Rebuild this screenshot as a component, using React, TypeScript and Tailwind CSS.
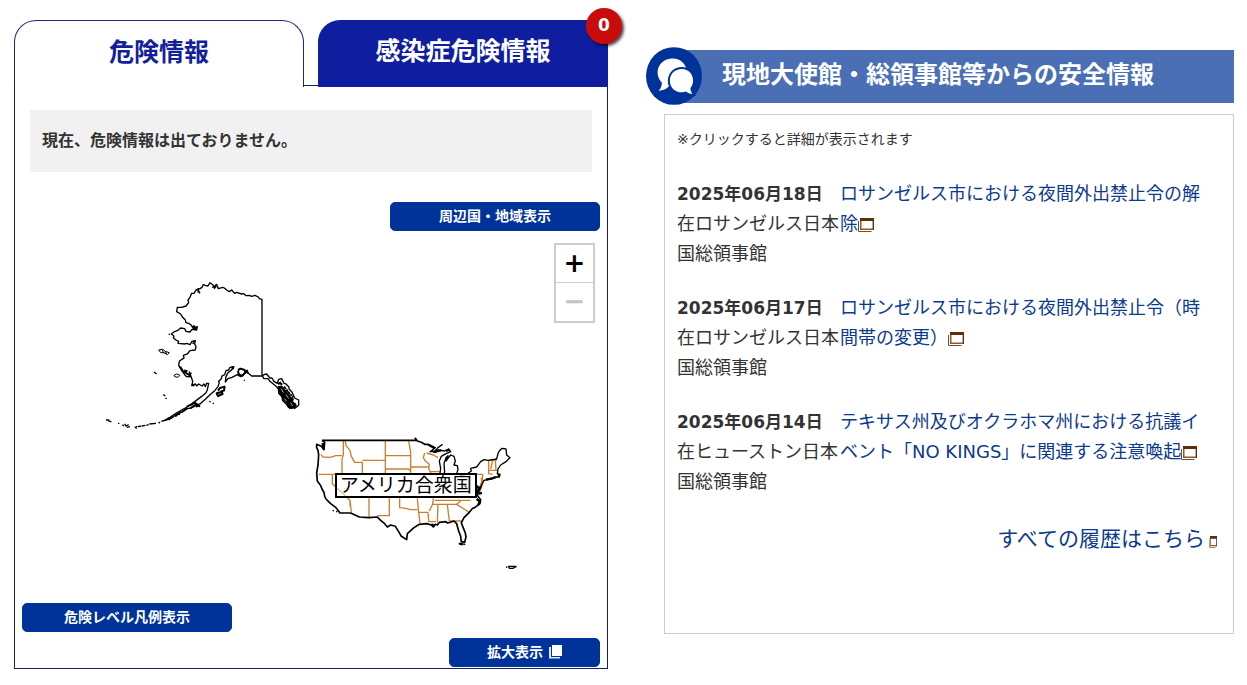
import { useState } from "react";

const news = [
  {
    date: "2025年06月18日",
    office: "在ロサンゼルス日本国総領事館",
    title: "ロサンゼルス市における夜間外出禁止令の解除",
  },
  {
    date: "2025年06月17日",
    office: "在ロサンゼルス日本国総領事館",
    title: "ロサンゼルス市における夜間外出禁止令（時間帯の変更）",
  },
  {
    date: "2025年06月14日",
    office: "在ヒューストン日本国総領事館",
    title: "テキサス州及びオクラホマ州における抗議イベント「NO KINGS」に関連する注意喚起",
  },
];

const mapButton =
  "flex h-[29px] items-center justify-center gap-1.5 rounded-[5px] border border-[#003399] bg-[#003399] pb-0.5 text-sm font-bold text-white";

function WindowIcon({ className }: { className: string }) {
  return (
    <svg viewBox="0 0 16 14" preserveAspectRatio="none" className={className} aria-hidden="true">
      <path d="M0.5 3V13.5H13.5" fill="none" stroke="#7a4a20" />
      <rect x="2" y="0" width="14" height="12" fill="#8a5a33" />
      <rect x="3.500" y="3" width="11" height="7.500" fill="#fff" />
      <rect x="2" y="0" width="14" height="3" fill="#5c2f0a" />
      <path d="M15.500 0V12" stroke="#5c2f0a" />
    </svg>
  );
}

function CopyIcon() {
  return (
    <svg viewBox="0 0 13 15" className="h-[15px] w-[13px]" aria-hidden="true">
      <rect x="3" y="1" width="10" height="11" fill="#fff" />
      <path d="M0 3H2V13H11V14.500H0Z" fill="#dfe6f5" />
    </svg>
  );
}

function ChatIcon() {
  return (
    <svg viewBox="18 22 169 174" className="h-[58px] w-14" aria-hidden="true">
      <ellipse cx="102.500" cy="109" rx="84.500" ry="87" fill="#003399" />
      <path
        d="M98 56C73 56 53 74 53 98C53 111 58 121 66 129C66 139 62 147 56 154C70 153 80 149 86 141C90 142 94 142 98 142C123 142 141 123 141 98C141 74 123 56 98 56Z"
        fill="#fff"
      />
      <path
        d="M126 88C105 88 90 103 90 123C90 144 106 158 126 158C131 158 135 157 139 156C144 160 150 163 158 163C154 157 152 151 152 145C157 139 160 132 160 123C160 103 146 88 126 88Z"
        fill="#fff"
        stroke="#003399"
        strokeWidth="12"
        paintOrder="stroke"
      />
    </svg>
  );
}

function CountryMap() {
  return (
    <svg viewBox="15 231 592 372" className="block h-auto w-full" fill="none" strokeLinejoin="round" role="img" aria-label="アメリカ合衆国の地図">
      {/* Alaska */}
      <g transform="translate(90 270) scale(0.3333)" stroke="#000" strokeWidth="4">
        <path d="M516 316V88L508 86L505 81L495 76L485 79L478 76L468 77L462 71L455 72L440 67L434 70L425 60L418 65L410 60L403 54L398 52L385 56L380 43L372 50L368 44L360 38L354 48L346 46L340 44L336 52L330 56L318 60L312 70L305 70L300 82L294 90L296 98L288 108L275 112L262 112L260 125L272 132L278 142L286 150L288 158L296 160L304 166L310 175L322 170L320 180L306 178L300 186L288 184L284 176L272 174L262 182L252 186L244 192L252 198L250 204L258 210L266 214L264 220L285 222L290 220L300 224L306 214L316 212L314 222L318 230L316 240L300 242L292 252L280 256L282 264L276 268L268 274L266 286L272 296L284 308L274 300L284 314L290 320L302 320L298 306L304 322L308 334L306 346L316 342L320 348L326 342L336 348L342 342L346 350L350 340L356 340L352 360L348 368L334 380L318 392L304 402L290 412L275 420L258 430L240 442L225 450" />
        <path d="M225 452L244 444L262 432L278 426L292 416L304 414L318 406L330 402L346 388L360 374L374 362L384 350L388 338L386 334L394 326L396 318L404 314L408 302L416 300L420 292L432 290L424 300L414 308L408 320L406 336L414 326L426 322L442 314L452 320L464 310L470 306L478 312L485 318L516 318L522 314L530 312L540 324L546 324L552 334L562 340L566 328L575 326L582 340L588 342L596 350L598 358L606 366L614 384L626 390L626 406L616 414L612 416" />
        <path d="M516 316L522 326L534 326L540 334L550 342L560 350L566 358L566 370L576 380L578 392L590 404L600 416M322 56L330 70M326 54L324 68M366 52L378 50L372 56M312 166L314 180M310 172H322M314 212L308 222M304 308L296 322M276 304H292" />
        <path fill="#000" strokeWidth="3" d="M564 350L576 348L584 360L594 366L600 380L610 386L608 396L618 402L618 412L604 416L594 412L590 400L580 390L574 376L566 366Z" />
        <path stroke="#fff" strokeWidth="2" d="M574 356L580 368M588 374L596 386M584 386L590 394M602 398L608 408M592 366L598 372" />
        <path strokeWidth="6" strokeDasharray="9 2 6 2" d="M564 342L572 338L576 346M582 350L600 372L610 382" />
        <path strokeWidth="6" d="M444 300L452 296L464 300L466 308L456 318L446 312L444 302M470 300L474 310M426 290L430 298M290 410L304 404L314 398L330 410M302 414L318 404L322 412M384 362L390 354L404 350L402 362L394 364L398 372L384 378L380 370L394 366M304 346H314M270 290L278 302M308 168L320 176M286 308L300 316" />
        <path strokeWidth="3" d="M206 240L218 238L226 244L238 248L232 254L222 248L212 248L206 240M216 240L222 250M226 244L230 252M252 316L260 312L270 316L264 322L254 320ZM282 300L292 302L286 308Z" />
        <path strokeWidth="4" d="M236 192L240 194M192 306L200 312M220 374L226 378M226 384L230 386M358 394L362 396M368 400L372 400M462 330L464 332M48 450L58 450M55 453L64 456M84 460L88 460M97 464L102 468M104 462L108 468L116 464M110 472L120 470M134 470L140 476M138 470L142 470M144 470L154 468M156 468L166 466M169 466L176 464M178 462L198 460M206 460L210 456M214 454L228 450M232 446L246 442M236 450L250 440M252 436L270 432M256 440L274 424M276 424L292 414" />
      </g>

      {/* Lower 48 and Puerto Rico */}
      <g transform="translate(300 425) scale(0.3333)">
        <path
          stroke="#c9802c"
          strokeWidth="4"
          d="M63 88L68 96L90 97L108 92H126M130 48V90L126 102V148M56 148H528M136 48L138 62L150 76L154 94L164 112H187V148M187 106H256M256 48V148M256 92H331M256 132H326L334 140M326 48L332 82V148M332 126H386M374 84L370 98L376 108L388 118L386 130L394 148M388 140H418M380 84L400 90L414 98M97 148V176L150 226L154 262M150 226V244M207 220V276M268 220V272H232M299 220V248L318 250L330 254L352 254M352 220L356 262L360 294M358 262H384M386 290L384 262M400 220L398 238L388 258M384 290H408M412 292L414 238M442 238L448 288M398 238H470L484 226M470 238L492 252L508 262M448 288H486M404 226H512M528 148H548L546 176M566 106V146L578 148M566 106H590M578 106L572 132M586 104L588 134M566 136H592M508 146L510 160M548 162L538 190M544 158L546 182L540 200"
        />
        <path
          stroke="#000"
          strokeWidth="5"
          d="M66 46H348L346 40L352 48L364 52L374 58L386 58M66 46L74 52L72 74L64 64L50 58L50 68L54 76L56 90L54 120L50 144L52 168L58 176L62 182L68 196L72 202L74 214L78 222L92 236L108 248L120 264L152 264L178 276L206 278L232 276L242 286L254 296L262 306L272 300L286 304L296 320L304 334L320 344L322 326L342 308L358 298L380 296L394 300L400 306L406 298L412 300L418 292L438 290L442 294L450 292L462 288L470 296L476 318L482 334L484 350L494 352L498 336L496 324L492 314L484 294L492 278L508 262L518 250L524 248L540 236L542 224L534 214L528 200"
        />
        <path
          stroke="#000"
          strokeWidth="4"
          d="M386 58L406 68L390 80H404L414 68L428 58M384 60L402 70L396 78L406 82L424 76L434 78L446 72L452 80L434 88L424 94L418 108L422 130L420 144L428 150L434 142L432 116L438 98L444 92L438 108L444 100L452 90L462 94L466 108L462 120L472 122L474 134L470 146L484 150L500 148L514 138L512 130L530 126L542 110L552 104L564 106L590 102L594 86L598 78L606 70L618 72L620 90L630 98L618 110L602 120L594 132L592 146L600 148L598 156L582 156L570 162L552 166L546 178L540 190L536 204M560 164L582 160L596 154"
        />
        <path
          stroke="#000"
          strokeWidth="7"
          d="M68 54L70 72M400 82L410 76L424 76M438 78L448 74M530 182L538 192L530 200L538 206L546 204M534 190L544 186M530 222L540 230L534 240M394 298L404 304M558 164L578 160M478 356L488 358M594 148L600 152"
        />
        <path stroke="#000" strokeWidth="4" d="M98 256L102 258M108 260L112 260M476 356L496 358M618 426L622 427M626 424L646 424L640 430H628ZM646 426L650 425" />
      </g>
    </svg>
  );
}

function DangerPanel() {
  const [zoom, setZoom] = useState(0);

  return (
    <section className="min-w-0 pt-5">
      <div role="tablist" className="grid h-[67px] grid-cols-[1fr_14px_1fr] text-[25px] leading-none font-bold">
        <button
          role="tab"
          aria-selected="true"
          className="rounded-t-[22px] border border-b-0 border-[#1c2b7a] pb-1 text-[#14209a]"
        >
          危険情報
        </button>
        <div className="mb-px border-b border-[#14215c]" />
        <button
          role="tab"
          aria-selected="false"
          className="relative rounded-tl-[22px] bg-[#0f1e9e] pb-1 text-white"
        >
          感染症危険情報
          <span className="absolute -top-3 -right-3.5 flex h-9 w-9 items-center justify-center rounded-full bg-[#c80c0c] pb-0.5 text-[17px] shadow-[2px_2px_3px_rgba(0,0,0,0.7)]">
            0
          </span>
        </button>
      </div>

      <div className="border-x border-b border-[#14215c] pt-[23px]">
        <p className="mx-[15px] bg-[#f1f1f1] px-3 py-[19px] text-base leading-6 font-bold">
          現在、危険情報は出ておりません。
        </p>

        <div className="mt-[30px] flex justify-end px-[7px]">
          <button className={`${mapButton} w-[210px]`}>周辺国・地域表示</button>
        </div>

        <div className="relative">
          <CountryMap />
          <span className="absolute top-[65%] left-[54%] border-2 border-black bg-white/50 px-[3px] text-[19px] leading-[21px] whitespace-nowrap text-black">
            アメリカ合衆国
          </span>
          <div className="absolute top-3 right-3 flex w-[41px] flex-col border-2 border-[#ccc] bg-white text-[26px] leading-none">
            <button
              aria-label="拡大"
              onClick={() => setZoom(zoom + 1)}
              className="h-[38px] border-b border-[#ccc] pb-0.5 font-bold text-black"
            >
              +
            </button>
            <button
              aria-label="縮小"
              disabled={zoom === 0}
              onClick={() => setZoom(zoom - 1)}
              className="h-[38px] pb-0.5 font-bold text-black disabled:text-[#c4c4c4]"
            >
              −
            </button>
          </div>
        </div>

        <div className="flex px-[7px]">
          <button className={`${mapButton} w-[210px]`}>危険レベル凡例表示</button>
        </div>
        <div className="mt-1.5 mb-px flex justify-end px-[7px]">
          <button className={`${mapButton} w-[151px]`}>
            拡大表示
            <CopyIcon />
          </button>
        </div>
      </div>
    </section>
  );
}

function SafetyNews() {
  return (
    <section className="min-w-0 pt-[47px]">
      <div className="flex items-center">
        <div className="z-10 shrink-0">
          <ChatIcon />
        </div>
        <h2 className="-ml-7 flex h-[53px] flex-1 items-center bg-[#4b6fb5] pb-0.5 pl-12 text-2xl leading-none font-bold text-white">
          現地大使館・総領事館等からの安全情報
        </h2>
      </div>

      <div className="mt-[9px] ml-[18px] min-h-[520px] border border-[#ccc] px-3 pt-3.5">
        <p className="text-sm leading-5">※クリックすると詳細が表示されます</p>

        <ul className="mt-[30px] flex flex-col gap-6 text-lg leading-[30px]">
          {news.map((item) => (
            <li key={item.date} className="flex">
              <div className="w-[163px] shrink-0">
                <p className="text-[17px] leading-[30px] font-bold whitespace-nowrap">{item.date}</p>
                <p>{item.office}</p>
              </div>
              <a href="#" className="w-[364px] text-[#0c3a8c]">
                {item.title}
                <WindowIcon className="inline-block h-3.5 w-4 align-[-2px]" />
              </a>
            </li>
          ))}
        </ul>

        <p className="mt-[26px] pr-1 text-right text-[21px] leading-8">
          <a href="#" className="text-[#0c3a8c]">
            すべての履歴はこちら
            <WindowIcon className="ml-1 inline-block h-3 w-2 align-[-2px]" />
          </a>
        </p>
      </div>
    </section>
  );
}

export default function App() {
  return (
    <main
      lang="ja"
      className="grid grid-cols-[594fr_588fr] items-start gap-[38px] bg-white pr-[13px] pb-4 pl-3.5 font-['DejaVu_Sans','Noto_Sans_CJK_JP',sans-serif] text-[#333]"
    >
      <DangerPanel />
      <SafetyNews />
    </main>
  );
}
